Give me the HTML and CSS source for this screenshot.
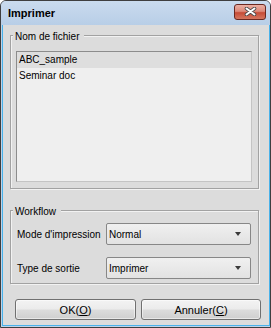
FILE: index.html
```html
<!DOCTYPE html>
<html lang="fr">
<head>
<meta charset="utf-8">
<title>Imprimer</title>
<link rel="stylesheet" href="styles.css">
</head>
<body>
<div class="window">
  <div class="titlebar">
    <span class="title">Imprimer</span>
    <span class="close">
      <svg width="13" height="9" viewBox="0 0 13 9">
        <path d="M2.5 1.5 L10.5 7.5 M10.5 1.5 L2.5 7.5" stroke="#4a4a4a" stroke-width="3.6" stroke-linecap="round"/>
        <path d="M2.5 1.5 L10.5 7.5 M10.5 1.5 L2.5 7.5" stroke="#ffffff" stroke-width="2" stroke-linecap="round"/>
      </svg>
    </span>
  </div>
  <div class="client">
    <div class="group group-files">
      <span class="group-title">Nom de fichier</span>
      <div class="listbox">
        <div class="item selected">ABC_sample</div>
        <div class="item">Seminar doc</div>
      </div>
    </div>
    <div class="group group-workflow">
      <span class="group-title">Workflow</span>
      <div class="row">
        <span class="label">Mode d'impression</span>
        <div class="select"><span>Normal</span><span class="arrow"></span></div>
      </div>
      <div class="row">
        <span class="label">Type de sortie</span>
        <div class="select"><span>Imprimer</span><span class="arrow"></span></div>
      </div>
    </div>
    <div class="buttons">
      <button class="btn btn-ok">OK(<u>O</u>)</button>
      <button class="btn btn-cancel">Annuler(<u>C</u>)</button>
    </div>
  </div>
</div>
</body>
</html>
```
FILE: styles.css
```css
html, body {
  margin: 0;
  padding: 0;
  background: #ffffff;
}
body {
  font-family: "Liberation Sans", Arial, sans-serif;
  font-size: 10px;
  color: #000;
}
.window {
  box-sizing: border-box;
  width: 271px;
  height: 328px;
  border: 1px solid #3f3f3f;
  border-radius: 6px 6px 0 0;
  background: #bdd3ea;
  display: flex;
  flex-direction: column;
  overflow: hidden;
}
.titlebar {
  height: 24px;
  flex: none;
  display: flex;
  align-items: center;
  justify-content: space-between;
  padding: 0 4px 0 7px;
  background: linear-gradient(#cadbee, #b8cee7);
}
.title {
  font-size: 11px;
  font-weight: bold;
  color: #000;
  margin-top: -1px;
}
.close {
  box-sizing: border-box;
  width: 32px;
  height: 16px;
  margin-top: -3px;
  border: 1px solid #6a2820;
  border-radius: 3px;
  background: linear-gradient(#ebb0a4 0%, #dd8a7a 45%, #c64c37 55%, #d5765f 100%);
  display: flex;
  align-items: center;
  justify-content: center;
}
.close svg {
  display: block;
}
.client {
  flex: 1;
  margin: 0 0 1px 1px;
  border: 1px solid #49b2ea;
  border-top: none;
  background: #dcdcdc;
  display: flex;
  flex-direction: column;
}
.group {
  position: relative;
  box-sizing: border-box;
  margin-left: 7px;
  width: 249px;
  border: 1px solid #a2a2a2;
  box-shadow: inset 1px 1px 0 #f2f2f2, 1px 1px 0 #f2f2f2;
}
.group-title {
  position: absolute;
  left: 2px;
  top: -5px;
  line-height: 12px;
  padding: 0 5px 0 2px;
  background: #dcdcdc;
}
.group-files {
  margin-top: 10px;
  height: 154px;
  padding: 15px 6px 6px 5px;
}
.listbox {
  box-sizing: border-box;
  height: 131px;
  border: 1px solid #8c8c8c;
  border-right-color: #c4c4c4;
  border-bottom-color: #c4c4c4;
  background: #efefef;
}
.item {
  height: 16px;
  line-height: 16px;
  padding-left: 2px;
}
.item.selected {
  background: #dedede;
}
.group-workflow {
  margin-top: 21px;
  height: 74px;
  padding: 12px 7px 4px 6px;
  display: flex;
  flex-direction: column;
  gap: 12px;
}
.row {
  display: flex;
  align-items: center;
  height: 22px;
}
.label {
  width: 89px;
  flex: none;
}
.select {
  box-sizing: border-box;
  width: 145px;
  height: 22px;
  border: 1px solid #878787;
  border-radius: 2px;
  background: linear-gradient(#f0f0f0, #e2e2e2);
  display: flex;
  align-items: center;
  justify-content: space-between;
  padding: 0 9px 0 2px;
}
.arrow {
  width: 0;
  height: 0;
  border-left: 3.5px solid transparent;
  border-right: 3.5px solid transparent;
  border-top: 4px solid #3a3a3a;
}
.buttons {
  display: flex;
  gap: 5px;
  margin: 15px 0 0 12px;
}
.btn {
  box-sizing: border-box;
  height: 21px;
  border: 1px solid #707070;
  border-radius: 3px;
  background: linear-gradient(#f3f3f3 0%, #ebebeb 48%, #dcdcdc 52%, #cfcfcf 100%);
  font-family: "Liberation Sans", Arial, sans-serif;
  font-size: 11px;
  color: #000;
  padding: 0;
  box-shadow: inset 0 0 0 1px rgba(255,255,255,0.5);
}
.btn-ok { width: 121px; }
.btn-cancel { width: 120px; }
.btn u {
  text-underline-offset: 1px;
}
```
